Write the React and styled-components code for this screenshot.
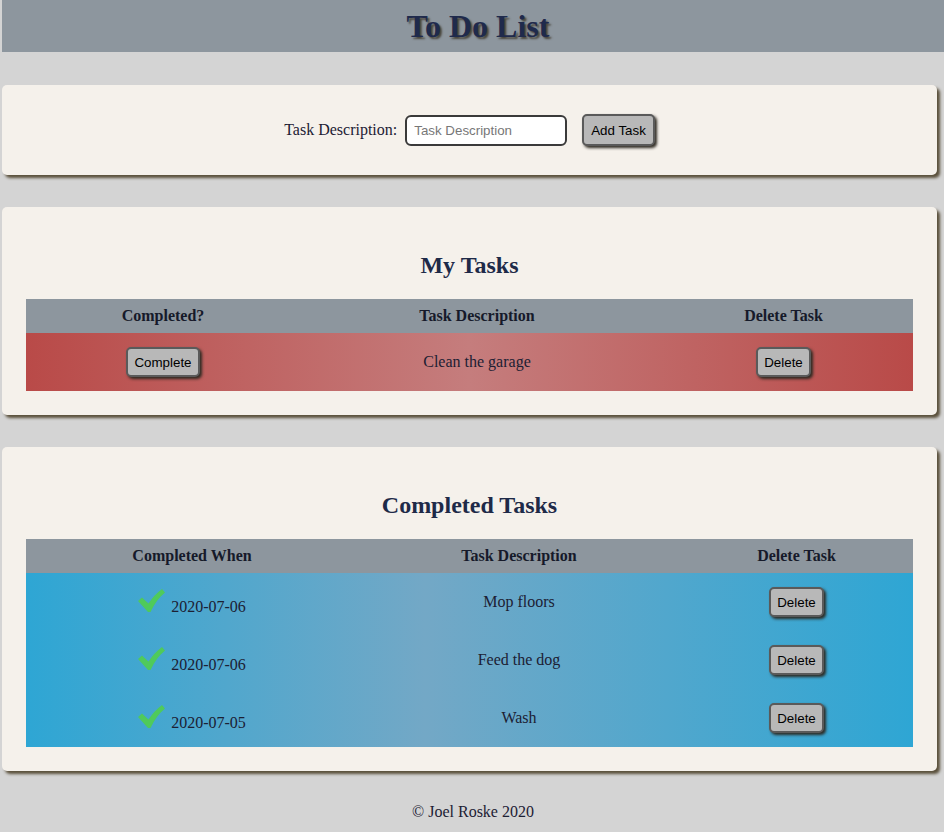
import React from "react";
import styled, { createGlobalStyle } from "styled-components";

const Global = createGlobalStyle`
  html, body { margin: 0; padding: 0; }
  body {
    background: #d4d4d4;
    font-family: "Liberation Serif", "Times New Roman", serif;
    font-size: 16px;
    color: #1c2033;
  }
`;

const Page = styled.div`
  padding-left: 2px;
  overflow: hidden;
`;

const Header = styled.header`
  height: 52px;
  background: #8d969e;
  display: flex;
  align-items: center;
  justify-content: center;
  padding-left: 10px;
`;

const Title = styled.h1`
  margin: 0;
  font-size: 32px;
  font-weight: bold;
  color: #1f2a4c;
  text-shadow: 2px 2px 2px rgba(50, 42, 25, 0.75);
`;

const Main = styled.main`
  padding: 33px 7px 0 0;
  display: flex;
  flex-direction: column;
  gap: 32px;
`;

const Card = styled.section`
  background: #f5f1eb;
  border-radius: 5px;
  box-shadow: 3px 3px 3px #5a503b;
  padding: ${(p) => (p.$form ? "28px 24px" : "24px")};
`;

const Form = styled.form`
  display: flex;
  align-items: center;
  justify-content: center;
  min-height: 34px;
`;

const Label = styled.label`
  font-size: 16px;
  color: #1c2033;
  margin-right: 8px;
`;

const Input = styled.input`
  box-sizing: border-box;
  width: 162px;
  height: 31px;
  border: 2px solid #3a3a3a;
  border-radius: 6px;
  padding: 0 7px;
  font-family: "Liberation Sans", Arial, sans-serif;
  font-size: 13.33px;
  background: #fff;
  margin-right: 15px;
  &::placeholder { color: #777; }
`;

const Button = styled.button`
  box-sizing: border-box;
  height: ${(p) => (p.$tall ? "32px" : "30px")};
  padding: 0 ${(p) => (p.$tall ? "7px" : "6px")};
  background: #b8b8b8;
  border: 2px solid #5a5a5a;
  border-radius: 5px;
  box-shadow: 2px 2px 3px #2e2a22;
  font-family: "Liberation Sans", Arial, sans-serif;
  font-size: 13.33px;
  color: #000;
  cursor: pointer;
`;

const Heading = styled.h2`
  margin: 20px 0;
  text-align: center;
  font-size: 24px;
  line-height: 28px;
  font-weight: bold;
  color: #1e2a48;
`;

const Table = styled.table`
  width: 100%;
  border-collapse: collapse;
  table-layout: fixed;
`;

const Th = styled.th`
  height: 34px;
  padding: 0;
  background: #8d969e;
  font-size: 16px;
  font-weight: bold;
  color: #161a2a;
  text-align: center;
  width: ${(p) => p.$w}px;
`;

const gradients = {
  done: "linear-gradient(to right, #2ea6d4 0%, #73a8c6 45%, #2ea6d4 100%)",
  todo: "linear-gradient(to right, #b94a48 0%, #c57d7d 50%, #b94a48 100%)",
};

const Body = styled.tbody`
  background: ${(p) => gradients[p.$variant]};
`;

const Td = styled.td`
  height: 58px;
  padding: 0;
  text-align: center;
  vertical-align: middle;
  font-size: 16px;
  color: #1c2033;
`;

const Check = styled.svg`
  width: 27px;
  height: 23px;
  margin-right: 6px;
  vertical-align: baseline;
  fill: #4fca5b;
`;

const Footer = styled.footer`
  padding: 32px 0 11px;
  text-align: center;
  font-size: 16px;
  line-height: 18px;
  color: #1c2033;
`;

const CheckIcon = () => (
  <Check viewBox="0 0 27 23" aria-hidden="true">
    <path d="M0 12 L4 8.5 L10.5 14.5 Q16 6 24 0 L27 3.5 Q18 11 12.5 23 L10 23 Z" />
  </Check>
);

const completed = [
  { when: "2020-07-06", desc: "Mop floors" },
  { when: "2020-07-06", desc: "Feed the dog" },
  { when: "2020-07-05", desc: "Wash" },
];

export default function App() {
  return (
    <>
      <Global />
      <Page>
        <Header>
          <Title>To Do List</Title>
        </Header>
        <Main>
          <Card $form>
            <Form onSubmit={(e) => e.preventDefault()}>
              <Label htmlFor="desc">Task Description:</Label>
              <Input id="desc" placeholder="Task Description" />
              <Button $tall type="submit">Add Task</Button>
            </Form>
          </Card>

          <Card>
            <Heading>My Tasks</Heading>
            <Table>
              <thead>
                <tr>
                  <Th $w={274}>Completed?</Th>
                  <Th $w={354}>Task Description</Th>
                  <Th $w={259}>Delete Task</Th>
                </tr>
              </thead>
              <Body $variant="todo">
                <tr>
                  <Td><Button>Complete</Button></Td>
                  <Td>Clean the garage</Td>
                  <Td><Button>Delete</Button></Td>
                </tr>
              </Body>
            </Table>
          </Card>

          <Card>
            <Heading>Completed Tasks</Heading>
            <Table>
              <thead>
                <tr>
                  <Th $w={332}>Completed When</Th>
                  <Th $w={322}>Task Description</Th>
                  <Th $w={233}>Delete Task</Th>
                </tr>
              </thead>
              <Body $variant="done">
                {completed.map((t, i) => (
                  <tr key={i}>
                    <Td>
                      <CheckIcon />
                      {t.when}
                    </Td>
                    <Td>{t.desc}</Td>
                    <Td><Button>Delete</Button></Td>
                  </tr>
                ))}
              </Body>
            </Table>
          </Card>
        </Main>
        <Footer>© Joel Roske 2020</Footer>
      </Page>
    </>
  );
}
